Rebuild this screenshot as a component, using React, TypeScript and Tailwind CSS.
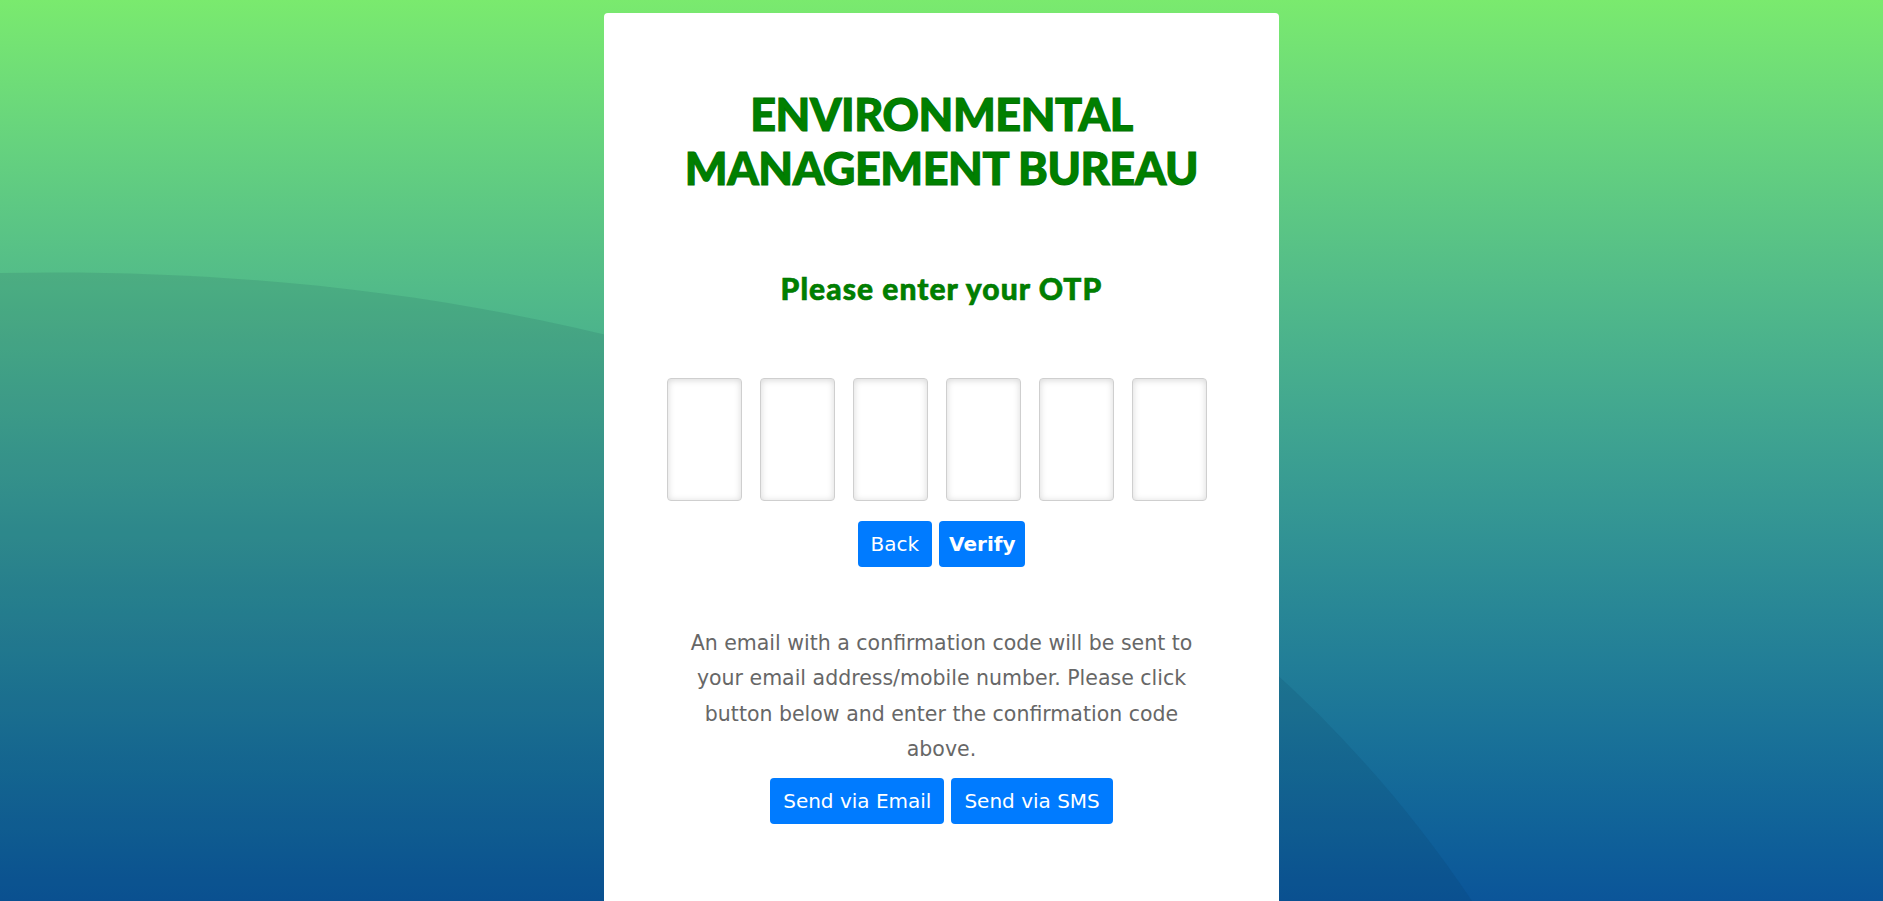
import React from 'react';

const heading = { fontFamily: 'Lato, "Open Sans", sans-serif' };
const body = { fontFamily: '"DejaVu Sans", "Open Sans", sans-serif' };

function OtpBoxes() {
  return (
    <div className="flex items-center justify-center gap-[18px] mr-[10px]">
      {[0, 1, 2, 3, 4, 5].map((i) => (
        <input
          key={i}
          maxLength={1}
          className="w-[75px] h-[123px] rounded border border-[#cfcfcf] bg-white text-center text-3xl outline-none shadow-[inset_0_1px_7px_rgba(0,0,0,0.16)]"
        />
      ))}
    </div>
  );
}

function BlueButton({ children, bold }: { children: React.ReactNode; bold?: boolean }) {
  return (
    <button
      className={`h-[46px] rounded bg-[#007bff] text-white text-[20px] ${bold ? 'px-[10px] font-bold' : 'px-[13px] font-normal'}`}
      style={body}
    >
      {children}
    </button>
  );
}

export default function App() {
  return (
    <div className="relative w-full h-[901px] overflow-hidden bg-linear-to-b from-[#7aea6e] to-[#0b5599]">
      <svg className="absolute inset-0 w-full h-full" viewBox="0 0 1883 901" preserveAspectRatio="none">
        <path d="M0,273 C560,262 1150,420 1472,901 L0,901 Z" fill="#062640" fillOpacity="0.1" />
      </svg>

      <div className="relative mx-auto mt-[13px] w-[675px] h-[888px] bg-white rounded-t flex flex-col items-center">
        <h1
          className="mt-[74px] text-center text-[45px] leading-[54px] font-black text-[#008000] tracking-[-0.01em] [-webkit-text-stroke:1px_#007300]"
          style={heading}
        >
          ENVIRONMENTAL
          <br />
          MANAGEMENT BUREAU
        </h1>

        <h2
          className="mt-[76px] text-[30px] leading-[34px] font-black text-[#008000] tracking-[0.035em] [-webkit-text-stroke:0.6px_#007300]"
          style={heading}
        >
          Please enter your OTP
        </h2>

        <div className="mt-[73px]">
          <OtpBoxes />
        </div>

        <div className="mt-[20px] flex gap-[7px]">
          <BlueButton>Back</BlueButton>
          <BlueButton bold>Verify</BlueButton>
        </div>

        <p
          className="mt-[59px] w-[530px] text-center text-[20.5px] leading-[35.4px] text-[#676767]"
          style={body}
        >
          An email with a confirmation code will be sent to your email address/mobile number. Please click button below
          and enter the confirmation code above.
        </p>

        <div className="mt-[10px] flex gap-[7px]">
          <BlueButton>Send via Email</BlueButton>
          <BlueButton>Send via SMS</BlueButton>
        </div>
      </div>
    </div>
  );
}
